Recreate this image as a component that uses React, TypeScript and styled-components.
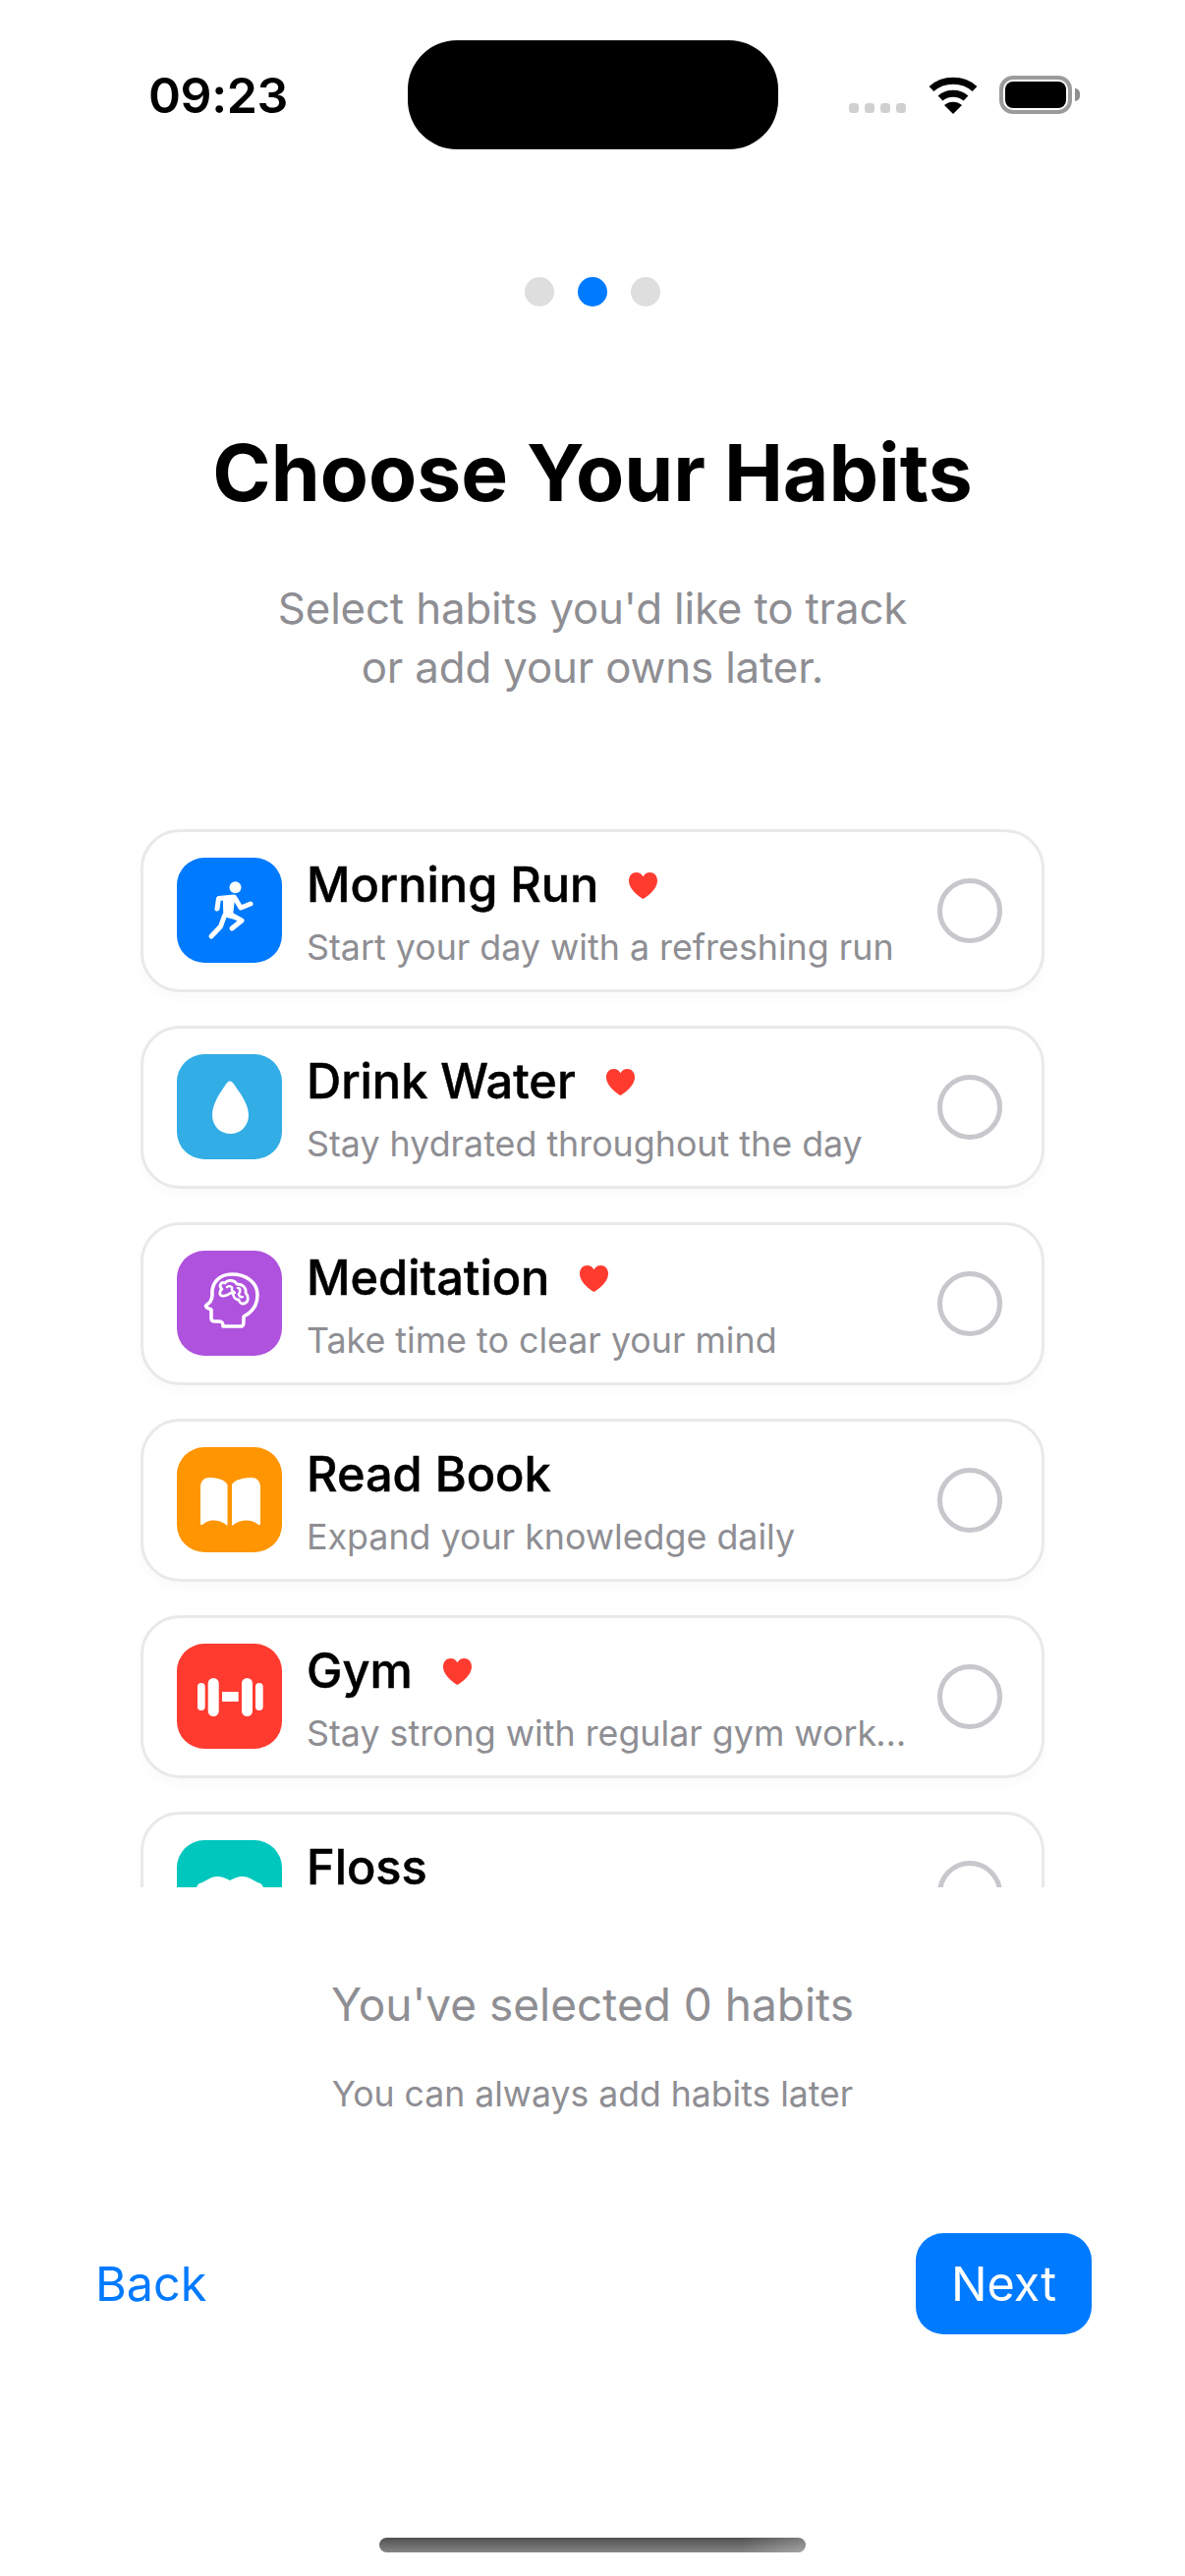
import React from "react";
import styled, { createGlobalStyle } from "styled-components";

const Global = createGlobalStyle`
  html, body { margin: 0; padding: 0; background: #fff; }
  body { font-family: Inter, "Liberation Sans", sans-serif; -webkit-font-smoothing: antialiased; }
  * { box-sizing: border-box; }
`;

const Page = styled.div`
  width: 1206px;
  height: 2622px;
  background: #fff;
  display: flex;
  flex-direction: column;
  overflow: hidden;
`;

const StatusBar = styled.div`
  margin-top: 41px;
  height: 111px;
  padding-left: 151px;
  display: grid;
  grid-template-columns: 264px 377px 1fr;
  align-items: center;
`;

const Time = styled.div`
  font-size: 50px;
  font-weight: 600;
  line-height: 1;
  letter-spacing: -0.4px;
  color: #000;
`;

const Island = styled.div`
  height: 111px;
  background: #000;
  border-radius: 50px;
`;

const StatusIcons = styled.div`
  display: flex;
  align-items: center;
  padding-left: 72px;
`;

const Signal = styled.div`
  display: flex;
  gap: 6px;
  align-self: flex-end;
  margin: 0 23px 0 0;
  padding-bottom: 1px;
`;

const SignalDot = styled.span`
  width: 10px;
  height: 10px;
  border-radius: 3.5px;
  background: #d0d0d0;
`;

const Battery = styled.div`
  margin-left: 22px;
  width: 74px;
  height: 39px;
  border: 4px solid #9b9b9b;
  border-radius: 14px;
  padding: 2px;
  position: relative;
  &::after {
    content: "";
    position: absolute;
    right: -12px;
    top: 9px;
    width: 5px;
    height: 13px;
    background: #8f8f8f;
    border-radius: 0 5px 5px 0;
  }
`;

const BatteryFill = styled.div`
  height: 100%;
  background: #000;
  border-radius: 8px;
`;

const Pager = styled.div`
  margin-top: 130px;
  display: flex;
  justify-content: center;
  gap: 24px;
`;

const PagerDot = styled.span<{ $active?: boolean }>`
  width: 30px;
  height: 30px;
  border-radius: 50%;
  background: ${(p) => (p.$active ? "#007aff" : "#dedede")};
`;

const Title = styled.h1`
  margin: 121px 0 0;
  text-align: center;
  font-size: 80.3px;
  line-height: 96px;
  font-weight: 700;
  color: #000;
`;

const Subtitle = styled.p`
  margin: 61px 0 0;
  text-align: center;
  font-size: 43.8px;
  line-height: 60px;
  font-weight: 400;
  letter-spacing: -0.15px;
  color: #8e8e93;
`;

const List = styled.div`
  margin-top: 134px;
  height: 1077px;
  overflow: hidden;
  padding: 0 143px;
  display: flex;
  flex-direction: column;
  gap: 34px;
`;

const Card = styled.div`
  flex: none;
  height: 166px;
  background: #fff;
  border: 3px solid #e9e9ea;
  border-radius: 40px;
  box-shadow: 0 6px 14px rgba(0, 0, 0, 0.025);
  padding: 0 40px 0 34px;
  display: flex;
  align-items: center;
`;

const IconTile = styled.div<{ $bg: string }>`
  flex: none;
  width: 107px;
  height: 107px;
  margin-bottom: 1px;
  border-radius: 28px;
  background: ${(p) => p.$bg};
  svg { display: block; }
`;

const Texts = styled.div`
  flex: 1;
  min-width: 0;
  margin-left: 25px;
  margin-right: 26px;
  padding-top: 4px;
`;

const NameRow = styled.div`
  display: flex;
  align-items: center;
  gap: 31px;
  height: 58px;
`;

const Name = styled.div`
  font-size: 48.7px;
  line-height: 58px;
  font-weight: 500;
  color: #000;
  -webkit-text-stroke: 0.5px #000;
`;

const Desc = styled.div`
  margin-top: 12px;
  font-size: 35.8px;
  line-height: 44px;
  font-weight: 400;
  color: #8e8e93;
  white-space: nowrap;
  overflow: hidden;
  text-overflow: ellipsis;
`;

const Radio = styled.div`
  flex: none;
  width: 66px;
  height: 66px;
  border-radius: 50%;
  border: 5px solid #c7c7cc;
`;

const Summary = styled.div`
  margin-top: 89px;
  text-align: center;
  font-size: 46px;
  line-height: 60px;
  color: #8e8e93;
`;

const Hint = styled.div`
  margin-top: 40px;
  text-align: center;
  font-size: 35.6px;
  line-height: 44px;
  color: #8e8e93;
`;

const Footer = styled.div`
  margin-top: 119px;
  padding: 0 95px 0 97px;
  display: flex;
  justify-content: space-between;
  align-items: center;
`;

const BackButton = styled.button`
  border: none;
  background: none;
  padding: 0;
  font: inherit;
  font-size: 48.5px;
  line-height: 60px;
  color: #007aff;
`;

const NextButton = styled.button`
  border: none;
  width: 179px;
  height: 103px;
  border-radius: 28px;
  background: #007aff;
  padding: 0;
  font: inherit;
  font-size: 48.5px;
  color: #fff;
`;

const HomeBar = styled.div`
  margin: 207px auto 0;
  width: 434px;
  height: 15px;
  border-radius: 8px;
  background: linear-gradient(90deg, rgba(255, 255, 255, 0) 85%, rgba(255, 255, 255, 0.25) 100%),
    linear-gradient(180deg, #505050 0%, #858585 100%);
`;

const Wifi = () => (
  <svg width="50" height="38" viewBox="0 0 50 38" fill="none" style={{ display: "block" }}>
    <path d="M3 12.5 C15 1.5 35 1.5 47 12.5" stroke="#000" strokeWidth="7" />
    <path d="M12 22 C19 15.5 31 15.5 38 22" stroke="#000" strokeWidth="7" />
    <path d="M16 29 C21 24.5 29 24.5 34 29 L25 38 Z" fill="#000" />
  </svg>
);

const Heart = () => (
  <svg width="29" height="27" viewBox="0 0 29 27" style={{ display: "block" }}>
    <path
      d="M14.5 27 C13.5 26.4 0 18.5 0 8.2 C0 3.5 3.4 0 7.6 0 C10.6 0 13 1.5 14.5 4.2 C16 1.5 18.4 0 21.4 0 C25.6 0 29 3.5 29 8.2 C29 18.5 15.5 26.4 14.5 27 Z"
      fill="#ff3b30"
    />
  </svg>
);

const Glyph: React.FC<{ children: React.ReactNode }> = ({ children }) => (
  <svg width="107" height="107" viewBox="0 0 107 107">{children}</svg>
);

const RunIcon = () => (
  <Glyph>
    <g transform="translate(15 12)" fill="none" stroke="#fff" strokeWidth="5" strokeLinecap="round" strokeLinejoin="round">
      <circle cx="44.5" cy="18.3" r="6" fill="#fff" stroke="none" />
      <path d="M26 40 L27.5 29.5 L43 28" />
      <path d="M33 29 L43 28.5 L41 45 L49.5 51 L33.5 47 Z" fill="#fff" strokeWidth="2.4" />
      <path d="M44 29 L50 39 L60 35" />
      <path d="M33.5 47 L29.5 58 L20 68" />
      <path d="M40 46 L51 52 L41 60" />
    </g>
  </Glyph>
);

const DropIcon = () => (
  <Glyph>
    <path d="M54 27.5 C56 27.5 57 29 58 30.5 C63 38 73 50 73 62 C73 73 65 81 54.5 81 C44 81 36 73 36 62 C36 50 45 38 50 30.5 C51 29 52 27.5 54 27.5 Z" fill="#fff" />
  </Glyph>
);

const BrainIcon = () => (
  <Glyph>
    <g transform="translate(15 12)" fill="none" stroke="#fff" strokeLinecap="round" strokeLinejoin="round">
      <path
        strokeWidth="3.6"
        d="M53 55 C63 50 67 42 67 33 C67 20 55 12 41 12 C28 12 20 21 21 33 C21 36 20 38 19 40 L14.5 44 C14.5 46 17 47 20 48 L20 57 C20 59 21 60 24 60 L28 60 C31 60 32 61 32 65 L50 65 C53 65 53 63 53 55 Z"
      />
      <path
        strokeWidth="2.8"
        d="M31 27 C27 24 30 19 34 21 C37 17 44 18 46 22 C52 22 56 26 55 31 C58 34 58 39 55 41 C52 43 49 42 48 38 C44 38 42 34 42 30 C38 32 35 35 31 34 C28 33 28 29 31 27 Z"
      />
      <path strokeWidth="2.4" d="M36 25 C39 23 42 25 41 27 C40 29 43 29 44 31 M47 26 C50 26 50 30 48 32 C47 33 50 36 52 35" />
    </g>
  </Glyph>
);

const BookIcon = () => (
  <Glyph>
    <g fill="#fff">
      <path d="M24 41 C24 34 28 31 33 31 C42 31 48 33 51.5 38 L51.5 80 C47 76 42 74.5 37 74.5 C32 74.5 28 77 26 79 L24 79 Z" />
      <path d="M85 41 C85 34 81 31 76 31 C67 31 59.5 33 56 38 L56 80 C61 76 66 74.5 71 74.5 C76 74.5 81 77 83 79 L85 79 Z" />
    </g>
  </Glyph>
);

const GymIcon = () => (
  <Glyph>
    <g fill="#fff">
      <rect x="21" y="40" width="7.7" height="28" rx="3.8" />
      <rect x="31.7" y="35" width="11" height="39" rx="5.5" />
      <rect x="46" y="49" width="16.7" height="10" />
      <rect x="66" y="35" width="11" height="39" rx="5.5" />
      <rect x="80" y="40" width="7.7" height="28" rx="3.8" />
    </g>
  </Glyph>
);

const ToothIcon = () => (
  <Glyph>
    <path
      d="M54 41 C50 39 46 37 41 37 C34 37 30 42 23 44 C20 46 18 52 18 58 C18 68 24 72 27 80 C29 87 32 92 36 92 C41 92 41 72 54 72 C67 72 67 92 72 92 C76 92 79 87 81 80 C84 72 90 68 90 58 C90 52 88 46 85 44 C78 42 74 37 67 37 C62 37 58 39 54 41 Z"
      fill="#fff"
    />
  </Glyph>
);

const habits = [
  { name: "Morning Run", desc: "Start your day with a refreshing run", bg: "#007aff", icon: <RunIcon />, fav: true },
  { name: "Drink Water", desc: "Stay hydrated throughout the day", bg: "#32ade6", icon: <DropIcon />, fav: true },
  { name: "Meditation", desc: "Take time to clear your mind", bg: "#af52de", icon: <BrainIcon />, fav: true },
  { name: "Read Book", desc: "Expand your knowledge daily", bg: "#ff9500", icon: <BookIcon />, fav: false },
  { name: "Gym", desc: "Stay strong with regular gym workouts", bg: "#ff3b30", icon: <GymIcon />, fav: true },
  { name: "Floss", desc: "Keep your teeth and gums healthy", bg: "#00c7be", icon: <ToothIcon />, fav: false },
];

export default function App() {
  return (
    <Page>
      <Global />
      <StatusBar>
        <Time>09:23</Time>
        <Island />
        <StatusIcons>
          <Signal>
            <SignalDot />
            <SignalDot />
            <SignalDot />
            <SignalDot />
          </Signal>
          <Wifi />
          <Battery>
            <BatteryFill />
          </Battery>
        </StatusIcons>
      </StatusBar>
      <Pager>
        <PagerDot />
        <PagerDot $active />
        <PagerDot />
      </Pager>
      <Title>Choose Your Habits</Title>
      <Subtitle>
        Select habits you'd like to track
        <br />
        or add your owns later.
      </Subtitle>
      <List>
        {habits.map((h) => (
          <Card key={h.name}>
            <IconTile $bg={h.bg}>{h.icon}</IconTile>
            <Texts>
              <NameRow>
                <Name>{h.name}</Name>
                {h.fav && <Heart />}
              </NameRow>
              <Desc>{h.desc}</Desc>
            </Texts>
            <Radio />
          </Card>
        ))}
      </List>
      <Summary>You've selected 0 habits</Summary>
      <Hint>You can always add habits later</Hint>
      <Footer>
        <BackButton>Back</BackButton>
        <NextButton>Next</NextButton>
      </Footer>
      <HomeBar />
    </Page>
  );
}
